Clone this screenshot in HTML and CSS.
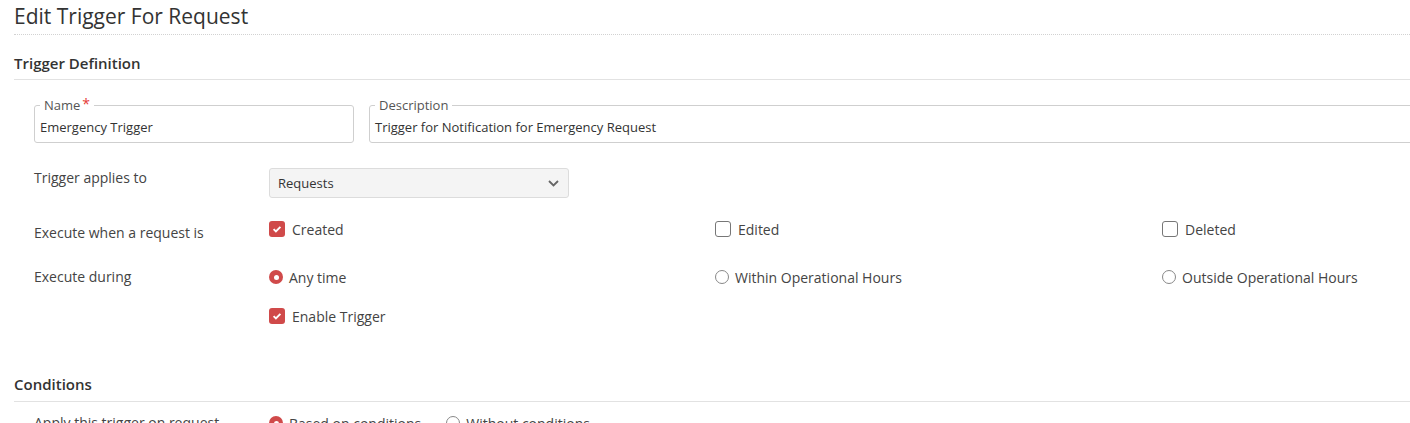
FILE: index.html
```html
<!DOCTYPE html>
<html lang="en">
<head>
<meta charset="utf-8">
<title>Edit Trigger For Request</title>
<link rel="stylesheet" href="styles.css">
</head>
<body>
<div class="page">
  <h1 class="page-title">Edit Trigger For Request</h1>

  <h2 class="section-title">Trigger Definition</h2>
  <div class="section-body">
    <div class="fields">
      <fieldset class="field field-name">
        <legend>Name<span class="req">*</span></legend>
        <div class="field-value">Emergency Trigger</div>
      </fieldset>
      <fieldset class="field field-desc">
        <legend>Description</legend>
        <div class="field-value">Trigger for Notification for Emergency Request</div>
      </fieldset>
    </div>

    <div class="row row-applies">
      <div class="row-label">Trigger applies to</div>
      <div class="select">
        <span>Requests</span>
        <svg class="chev" width="11" height="7" viewBox="0 0 11 7"><path d="M1 1l4.5 4.5L10 1" fill="none" stroke="#666" stroke-width="1.8"/></svg>
      </div>
    </div>

    <div class="row row-when">
      <div class="row-label label-low">Execute when a request is</div>
      <label class="opt"><span class="cb checked"><svg width="16" height="16" viewBox="0 0 16 16"><path d="M4.6 8.2l2.3 2.3 4.5-4.6" fill="none" stroke="#fff" stroke-width="1.9"/></svg></span>Created</label>
      <label class="opt"><span class="cb"></span>Edited</label>
      <label class="opt"><span class="cb"></span>Deleted</label>
    </div>

    <div class="row row-during">
      <div class="row-label">Execute during</div>
      <label class="opt opt-radio"><span class="rd checked"></span>Any time</label>
      <label class="opt opt-radio"><span class="rd"></span>Within Operational Hours</label>
      <label class="opt opt-radio"><span class="rd"></span>Outside Operational Hours</label>
    </div>

    <div class="row row-enable">
      <div class="row-label"></div>
      <label class="opt"><span class="cb checked"><svg width="16" height="16" viewBox="0 0 16 16"><path d="M4.6 8.2l2.3 2.3 4.5-4.6" fill="none" stroke="#fff" stroke-width="1.9"/></svg></span>Enable Trigger</label>
    </div>
  </div>

  <h2 class="section-title section-conditions">Conditions</h2>
  <div class="section-body">
    <div class="row row-apply">
      <div class="row-label">Apply this trigger on request</div>
      <div class="inline-opts">
        <label class="opt opt-radio"><span class="rd checked"></span>Based on conditions</label>
        <label class="opt opt-radio"><span class="rd"></span>Without conditions</label>
      </div>
    </div>
  </div>
</div>
</body>
</html>
```

FILE: styles.css
```css
html, body {
  margin: 0;
  padding: 0;
  overflow: hidden;
  background: #fff;
}
body {
  width: 1410px;
  height: 423px;
  font-family: "Open Sans", "Liberation Sans", sans-serif;
  color: #333;
}
.page {
  padding-left: 14px;
  width: 1800px;
}
.page-title {
  margin: 2px 0 0;
  font-size: 21px;
  font-weight: 400;
  line-height: 28px;
  color: #333;
  padding-bottom: 4px;
  border-bottom: 1px dotted #d2d2d2;
}
.section-title {
  margin: 18px 0 0;
  font-size: 15px;
  font-weight: 600;
  line-height: 20px;
  color: #333;
  padding-bottom: 6px;
  border-bottom: 1px solid #e2e2e2;
}
.section-conditions {
  margin-top: 48px;
  padding-bottom: 7px;
}
.section-body {
  padding-left: 20px;
}
.fields {
  display: flex;
  gap: 15px;
  margin-top: 17px;
}
.field {
  margin: 0;
  padding: 0 5px;
  border: 1px solid #cfcfcf;
  border-radius: 3px;
  min-width: 0;
}
.field-name { width: 308px; }
.field-desc { width: 1300px; }
.field legend {
  padding: 0 4px;
  font-size: 13px;
  line-height: 16px;
  color: #555;
}
.req {
  color: #e53935;
  margin-left: 2px;
  font-size: 14px;
  position: relative;
  top: -1px;
}
.field-value {
  height: 29px;
  line-height: 28px;
  font-size: 13px;
  color: #333;
}
.row {
  display: grid;
  grid-template-columns: 235px 446px 447px 447px;
  align-items: start;
}
.row-label {
  font-size: 14px;
  line-height: 20px;
  color: #444;
}
.label-low { padding-top: 4px; }
.row-applies { margin-top: 25px; }
.row-when { margin-top: 21px; }
.row-during { margin-top: 24px; }
.row-enable { margin-top: 19px; }
.row-apply { margin-top: 11px; }

.select {
  box-sizing: border-box;
  width: 300px;
  height: 30px;
  border: 1px solid #dcdcdc;
  border-radius: 3px;
  background: #f4f4f4;
  display: flex;
  align-items: center;
  justify-content: space-between;
  padding: 0 9px 0 8px;
  font-size: 13px;
  color: #333;
}
.chev { display: block; }

.opt {
  display: flex;
  align-items: center;
  gap: 7px;
  height: 20px;
  font-size: 14px;
  color: #444;
}
.opt-radio { gap: 6px; }
.cb {
  width: 16px;
  height: 16px;
  box-sizing: border-box;
  border: 1px solid #777;
  border-radius: 3px;
  background: #fff;
  display: flex;
  flex: none;
}
.cb.checked {
  border: none;
  background: #d04a4a;
}
.rd {
  width: 14px;
  height: 14px;
  box-sizing: border-box;
  border: 1px solid #888;
  border-radius: 50%;
  background: #fff;
  flex: none;
  display: flex;
  align-items: center;
  justify-content: center;
}
.rd.checked {
  border: none;
  background: #d04a4a;
}
.rd.checked::after {
  content: "";
  width: 5px;
  height: 5px;
  border-radius: 50%;
  background: #fff;
}
.inline-opts {
  display: flex;
  gap: 25px;
  grid-column: 2 / span 2;
}
```
